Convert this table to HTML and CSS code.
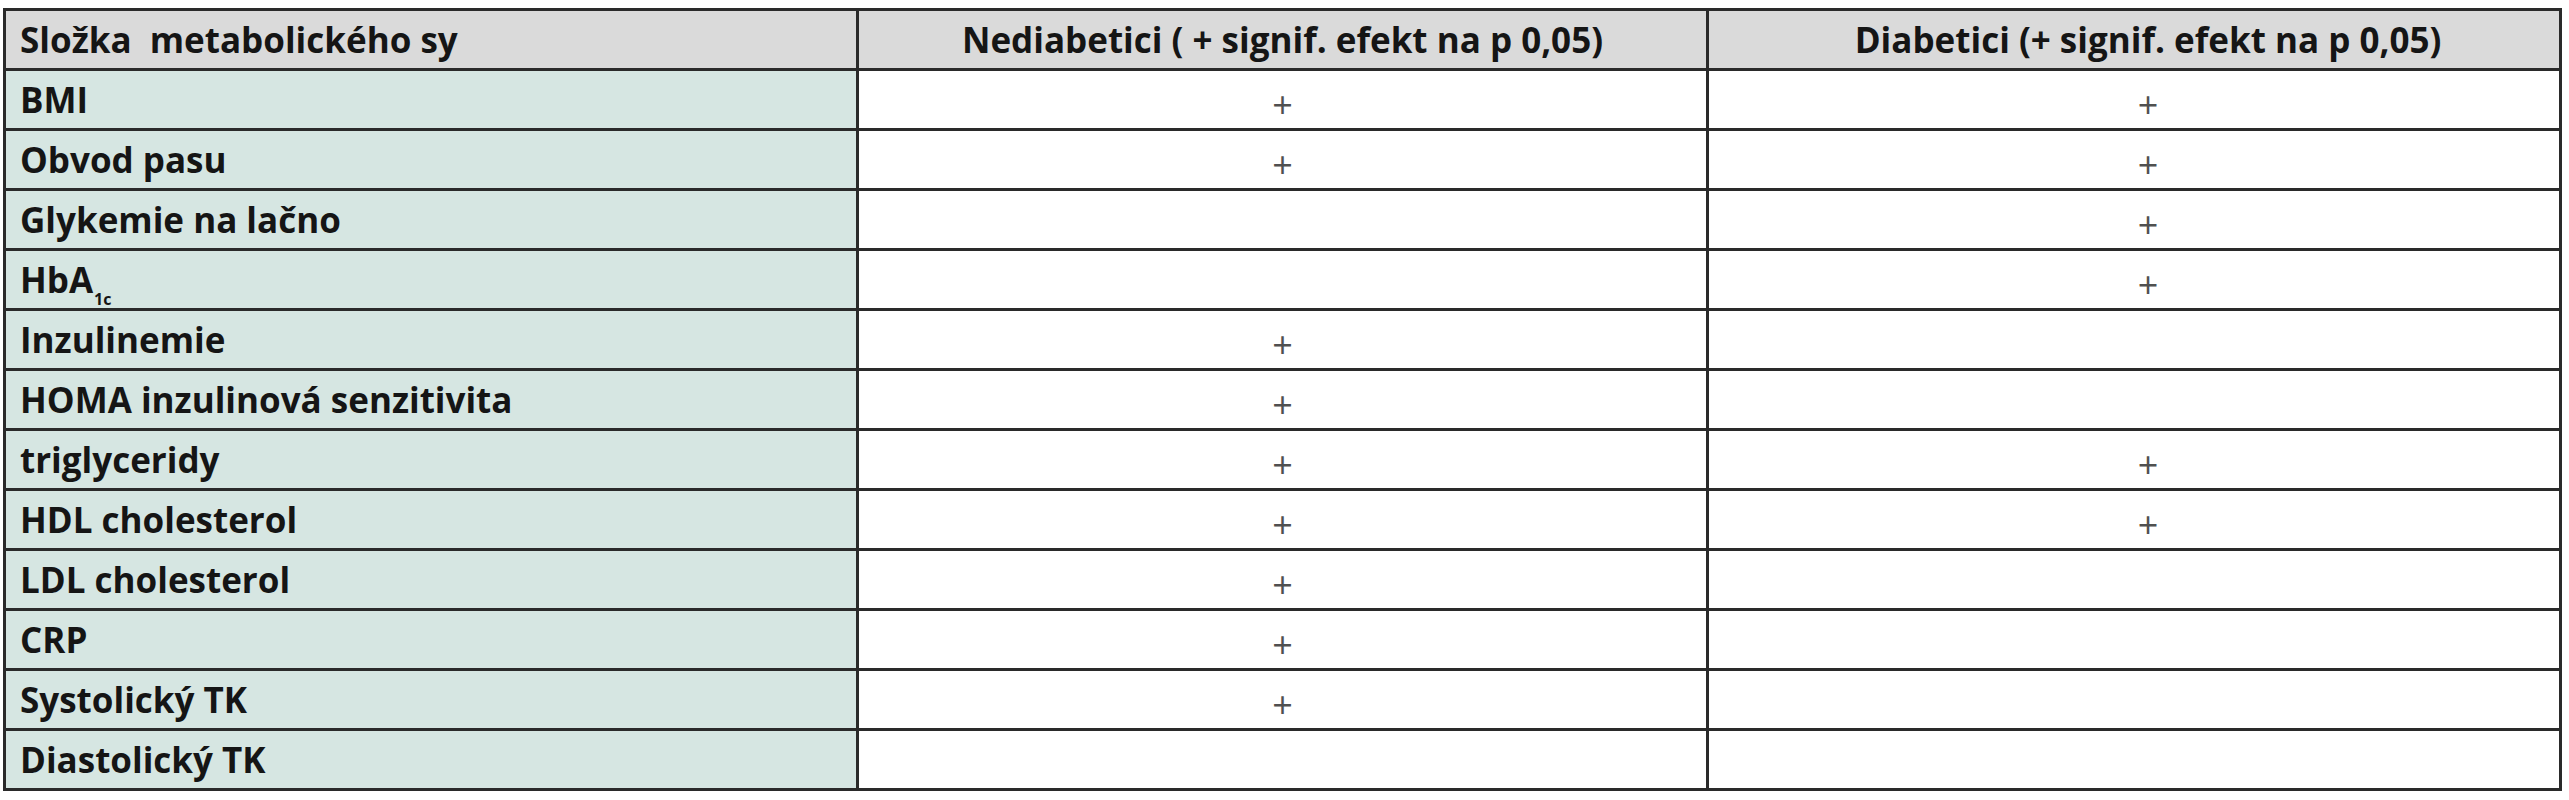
FILE: index.html
```html
<!DOCTYPE html>
<html lang="cs">
<head>
<meta charset="utf-8">
<title>Složka metabolického syndromu</title>
<link rel="stylesheet" href="styles.css">
</head>
<body>
<div class="page">
<table class="grid">
  <colgroup>
    <col class="c1">
    <col class="c2">
    <col class="c3">
  </colgroup>
  <thead>
    <tr>
      <th class="lbl">Složka&nbsp; metabolického sy</th>
      <th class="mid">Nediabetici ( + signif. efekt na p 0,05)</th>
      <th class="rt">Diabetici (+ signif. efekt na p 0,05)</th>
    </tr>
  </thead>
  <tbody>
    <tr><td class="lbl">BMI</td><td class="mid mk">+</td><td class="rt mk">+</td></tr>
    <tr><td class="lbl">Obvod pasu</td><td class="mid mk">+</td><td class="rt mk">+</td></tr>
    <tr><td class="lbl">Glykemie na lačno</td><td class="mid mk"></td><td class="rt mk">+</td></tr>
    <tr><td class="lbl">HbA<sub class="sub">1c</sub></td><td class="mid mk"></td><td class="rt mk">+</td></tr>
    <tr><td class="lbl">Inzulinemie</td><td class="mid mk">+</td><td class="rt mk"></td></tr>
    <tr><td class="lbl">HOMA inzulinová senzitivita</td><td class="mid mk">+</td><td class="rt mk"></td></tr>
    <tr><td class="lbl">triglyceridy</td><td class="mid mk">+</td><td class="rt mk">+</td></tr>
    <tr><td class="lbl">HDL cholesterol</td><td class="mid mk">+</td><td class="rt mk">+</td></tr>
    <tr><td class="lbl">LDL cholesterol</td><td class="mid mk">+</td><td class="rt mk"></td></tr>
    <tr><td class="lbl">CRP</td><td class="mid mk">+</td><td class="rt mk"></td></tr>
    <tr><td class="lbl">Systolický TK</td><td class="mid mk">+</td><td class="rt mk"></td></tr>
    <tr><td class="lbl">Diastolický TK</td><td class="mid mk"></td><td class="rt mk"></td></tr>
  </tbody>
</table>
</div>
</body>
</html>
```

FILE: styles.css
```css
html, body {
  margin: 0;
  padding: 0;
  background: #ffffff;
}

.page {
  padding: 8px 0 0 3px;
}

.grid {
  width: 2556px;
  table-layout: fixed;
  border-collapse: collapse;
  font-family: "Open Sans", "Liberation Sans", sans-serif;
  font-weight: 700;
  font-size: 35px;
  color: #151515;
}

.c1 { width: 853px; }
.c2 { width: 850px; }
.c3 { width: 853px; }

.grid th,
.grid td {
  border: 3px solid #2a2a2a;
  height: 57px;
  padding: 0;
  vertical-align: middle;
  line-height: 40px;
  white-space: nowrap;
}

.grid th {
  background: #dadada;
  font-weight: 700;
}

.grid .lbl {
  text-align: left;
  padding-left: 14px;
  background: #d6e6e2;
}

.grid th.lbl {
  background: #dadada;
}

.grid .mid {
  text-align: center;
}

.grid .rt {
  text-align: center;
  padding-left: 28px;
}

.grid td.mk {
  height: 47px;
  padding-top: 10px;
  font-weight: 400;
  color: #505050;
  font-size: 36px;
  line-height: 36px;
  background: #ffffff;
}

.sub {
  font-size: 16px;
  line-height: 0;
  vertical-align: -12px;
  margin-left: 1px;
}
```
